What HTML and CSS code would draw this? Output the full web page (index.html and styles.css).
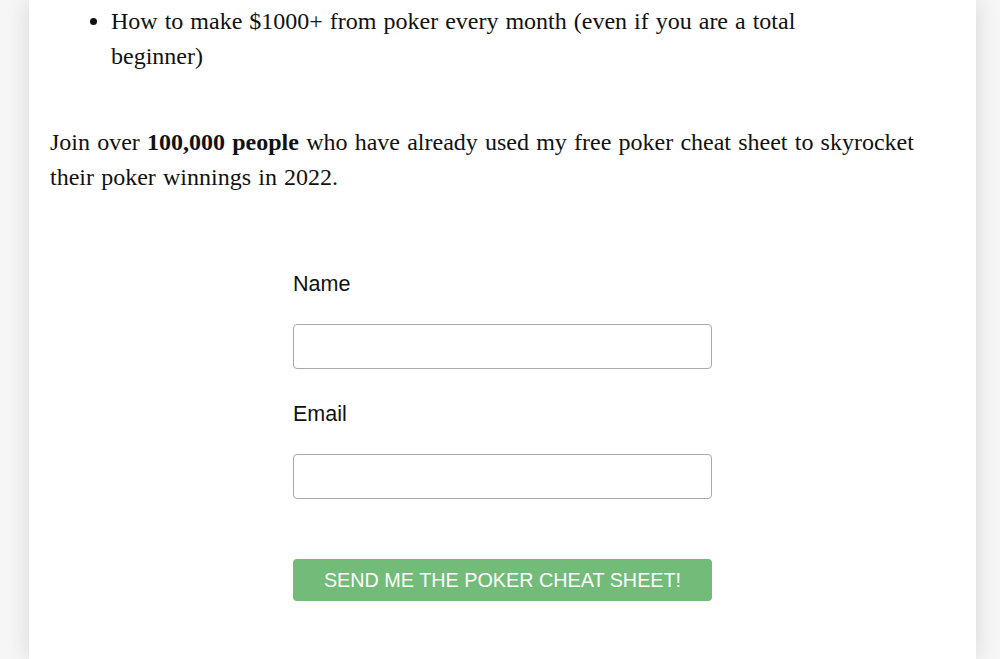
FILE: index.html
```html
<!DOCTYPE html>
<html lang="en">
  <head>
    <meta charset="UTF-8">
    <meta name="viewport" content="width=device-width, initial-scale=1.0">
    <title>Free Poker Cheat Sheet</title>
    <link rel="stylesheet" href="styles.css">
  </head>
  <body>
    <div class="page">
      <div class="post">
        <ul class="perks">
          <li>How to make $1000+ from poker every month (even if you are a total beginner)</li>
        </ul>

        <p class="pitch">Join over <strong>100,000 people</strong> who have already used my free poker cheat sheet to skyrocket their poker winnings in 2022.</p>

        <form class="optin" id="optin-form">
          <label for="optin-name">Name</label>
          <input type="text" id="optin-name">
          <label for="optin-email">Email</label>
          <input type="email" id="optin-email">
          <button type="submit">Send me the poker cheat sheet!</button>
        </form>
      </div>
    </div>
  </body>
</html>
```

FILE: styles.css
```css
body {
  margin: 0;
  padding: 0;
  background: #f6f6f6;
  font-family: 'Liberation Serif', 'Times New Roman', serif;
  color: #111;
  overflow: hidden;
}

.page {
  height: 659px;
  padding: 0 24px 0 29px;
}

.post {
  height: 100%;
  box-sizing: border-box;
  background: #fff;
  padding: 4px 21px 0 21px;
  box-shadow: 0 0 22px rgba(0, 0, 0, 0.13);
  font-size: 24px;
  line-height: 35px;
}

.perks {
  margin: 0 100px 0 0;
  padding-left: 61px;
  word-spacing: 1px;
}

.pitch {
  margin: 51px 30px 0 0;
  word-spacing: 1.2px;
}

.optin {
  width: 419px;
  margin: 77px auto 0;
  display: flex;
  flex-direction: column;
  font-family: 'Liberation Sans', Arial, sans-serif;
}

.optin label {
  font-size: 21.5px;
  line-height: 24px;
  margin-bottom: 28px;
}

.optin input {
  height: 45px;
  box-sizing: border-box;
  border: 1px solid #a9a9a9;
  border-radius: 4px;
  margin: 0 0 33px;
  padding: 0 10px;
  font-size: 18px;
  outline: none;
}

.optin button {
  height: 42px;
  margin-top: 27px;
  border: none;
  border-radius: 4px;
  background: #72bb78;
  color: #fff;
  font-family: inherit;
  font-size: 19.8px;
  text-transform: uppercase;
  cursor: pointer;
}
```
